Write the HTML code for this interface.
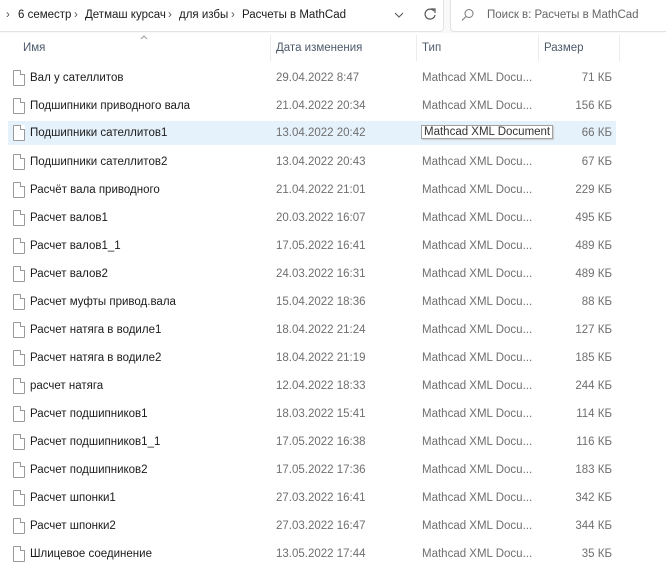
<!DOCTYPE html><html><head><meta charset="utf-8"><style>
body{margin:0;width:666px;height:587px;background:#fff;font-family:"Liberation Sans",sans-serif;font-size:11.5px;position:relative;overflow:hidden}
.top{position:absolute;left:0;top:0;width:666px;height:33px;background:#f9f9f9}
.addr{position:absolute;left:-2px;top:-2px;width:444px;height:32px;background:#fff;border:1px solid #e3e3e3;border-radius:0 0 4px 0}
.srch{position:absolute;left:450px;top:-2px;width:220px;height:32px;background:#fff;border:1px solid #e3e3e3;border-radius:0 0 0 4px}
.t{position:absolute;white-space:nowrap}
.hd{color:#4d5a6b;top:42px}
.sep{position:absolute;top:35px;height:26px;width:1px;background:#ececec}
.row{position:absolute;left:0;width:666px;height:24px}
.row .n{left:30px;color:#1b1b1b}
.row .d{left:276px;color:#6f6f6f}
.row .y{left:422px;color:#6f6f6f}
.row .s{right:54px;color:#6f6f6f}
.row .t{top:6px}
.ic{position:absolute;left:13px;top:4px;width:10px;height:14px;border:1px solid #9a9a9a;background:#fff;border-radius:1px}
.ic:after{content:"";position:absolute;right:-1px;top:-1px;width:4px;height:4px;border-left:1px solid #9a9a9a;border-bottom:1px solid #9a9a9a;background:#fff}
.sel{background:#e5f1fb;left:8px;width:608px}
.sel .n{left:22px}.sel .d{left:268px}.sel .y{left:414px}.sel .ic{left:5px}.sel .s{right:4px}
.tip{border:1px solid #a0a0a0;box-shadow:1px 1px 1px #ccc;background:#fff;padding:0 2px;top:4px!important;left:413px!important;color:#333!important}
</style></head><body>
<div class="top"><div class="addr"></div><div class="srch"></div></div>
<div class="t" style="left:6px;top:9px;color:#555">›</div>
<div class="t" style="left:18px;top:9px;color:#1b1b1b">6 семестр</div>
<div class="t" style="left:74px;top:9px;color:#555">›</div>
<div class="t" style="left:85px;top:9px;color:#1b1b1b">Детмаш курсач</div>
<div class="t" style="left:168px;top:9px;color:#555">›</div>
<div class="t" style="left:179px;top:9px;color:#1b1b1b">для избы</div>
<div class="t" style="left:231px;top:9px;color:#555">›</div>
<div class="t" style="left:242px;top:9px;color:#1b1b1b">Расчеты в MathCad</div>
<svg style="position:absolute;left:393px;top:11px" width="12" height="8"><path d="M2 2l4 4 4-4" fill="none" stroke="#555" stroke-width="1"/></svg>
<svg style="position:absolute;left:423px;top:7px" width="14" height="14"><path d="M11 4A5 5 0 1 0 12 8" fill="none" stroke="#555" stroke-width="1.2"/><path d="M8 2h4v4" fill="none" stroke="#555" stroke-width="1.2"/></svg>
<svg style="position:absolute;left:461px;top:8px" width="14" height="14"><circle cx="8" cy="5.5" r="4" fill="none" stroke="#777"/><path d="M5 8.5L1 12.5" stroke="#777"/></svg>
<div class="t" style="left:487px;top:9px;color:#666">Поиск в: Расчеты в MathCad</div>
<svg style="position:absolute;left:140px;top:35px" width="8" height="5"><path d="M1 4l3-3 3 3" fill="none" stroke="#999"/></svg>
<div class="t hd" style="left:23px">Имя</div>
<div class="t hd" style="left:276px">Дата изменения</div>
<div class="t hd" style="left:422px">Тип</div>
<div class="t hd" style="left:544px">Размер</div>
<div class="sep" style="left:270px"></div><div class="sep" style="left:416px"></div><div class="sep" style="left:538px"></div><div class="sep" style="left:619px"></div>
<div class="row" style="top:66px"><div class="ic"></div><div class="t n">Вал у сателлитов</div><div class="t d">29.04.2022 8:47</div><div class="t y">Mathcad XML Docu...</div><div class="t s">71 КБ</div></div>
<div class="row" style="top:94px"><div class="ic"></div><div class="t n">Подшипники приводного вала</div><div class="t d">21.04.2022 20:34</div><div class="t y">Mathcad XML Docu...</div><div class="t s">156 КБ</div></div>
<div class="row sel" style="top:121px"><div class="ic"></div><div class="t n">Подшипники сателлитов1</div><div class="t d">13.04.2022 20:42</div><div class="t y tip">Mathcad XML Document</div><div class="t s">66 КБ</div></div>
<div class="row" style="top:150px"><div class="ic"></div><div class="t n">Подшипники сателлитов2</div><div class="t d">13.04.2022 20:43</div><div class="t y">Mathcad XML Docu...</div><div class="t s">67 КБ</div></div>
<div class="row" style="top:178px"><div class="ic"></div><div class="t n">Расчёт вала приводного</div><div class="t d">21.04.2022 21:01</div><div class="t y">Mathcad XML Docu...</div><div class="t s">229 КБ</div></div>
<div class="row" style="top:206px"><div class="ic"></div><div class="t n">Расчет валов1</div><div class="t d">20.03.2022 16:07</div><div class="t y">Mathcad XML Docu...</div><div class="t s">495 КБ</div></div>
<div class="row" style="top:234px"><div class="ic"></div><div class="t n">Расчет валов1_1</div><div class="t d">17.05.2022 16:41</div><div class="t y">Mathcad XML Docu...</div><div class="t s">489 КБ</div></div>
<div class="row" style="top:262px"><div class="ic"></div><div class="t n">Расчет валов2</div><div class="t d">24.03.2022 16:31</div><div class="t y">Mathcad XML Docu...</div><div class="t s">489 КБ</div></div>
<div class="row" style="top:290px"><div class="ic"></div><div class="t n">Расчет муфты привод.вала</div><div class="t d">15.04.2022 18:36</div><div class="t y">Mathcad XML Docu...</div><div class="t s">88 КБ</div></div>
<div class="row" style="top:318px"><div class="ic"></div><div class="t n">Расчет натяга в водиле1</div><div class="t d">18.04.2022 21:24</div><div class="t y">Mathcad XML Docu...</div><div class="t s">127 КБ</div></div>
<div class="row" style="top:346px"><div class="ic"></div><div class="t n">Расчет натяга в водиле2</div><div class="t d">18.04.2022 21:19</div><div class="t y">Mathcad XML Docu...</div><div class="t s">185 КБ</div></div>
<div class="row" style="top:374px"><div class="ic"></div><div class="t n">расчет натяга</div><div class="t d">12.04.2022 18:33</div><div class="t y">Mathcad XML Docu...</div><div class="t s">244 КБ</div></div>
<div class="row" style="top:402px"><div class="ic"></div><div class="t n">Расчет подшипников1</div><div class="t d">18.03.2022 15:41</div><div class="t y">Mathcad XML Docu...</div><div class="t s">114 КБ</div></div>
<div class="row" style="top:430px"><div class="ic"></div><div class="t n">Расчет подшипников1_1</div><div class="t d">17.05.2022 16:38</div><div class="t y">Mathcad XML Docu...</div><div class="t s">116 КБ</div></div>
<div class="row" style="top:458px"><div class="ic"></div><div class="t n">Расчет подшипников2</div><div class="t d">17.05.2022 17:36</div><div class="t y">Mathcad XML Docu...</div><div class="t s">183 КБ</div></div>
<div class="row" style="top:486px"><div class="ic"></div><div class="t n">Расчет шпонки1</div><div class="t d">27.03.2022 16:41</div><div class="t y">Mathcad XML Docu...</div><div class="t s">342 КБ</div></div>
<div class="row" style="top:514px"><div class="ic"></div><div class="t n">Расчет шпонки2</div><div class="t d">27.03.2022 16:47</div><div class="t y">Mathcad XML Docu...</div><div class="t s">344 КБ</div></div>
<div class="row" style="top:542px"><div class="ic"></div><div class="t n">Шлицевое соединение</div><div class="t d">13.05.2022 17:44</div><div class="t y">Mathcad XML Docu...</div><div class="t s">35 КБ</div></div>
</body></html>
